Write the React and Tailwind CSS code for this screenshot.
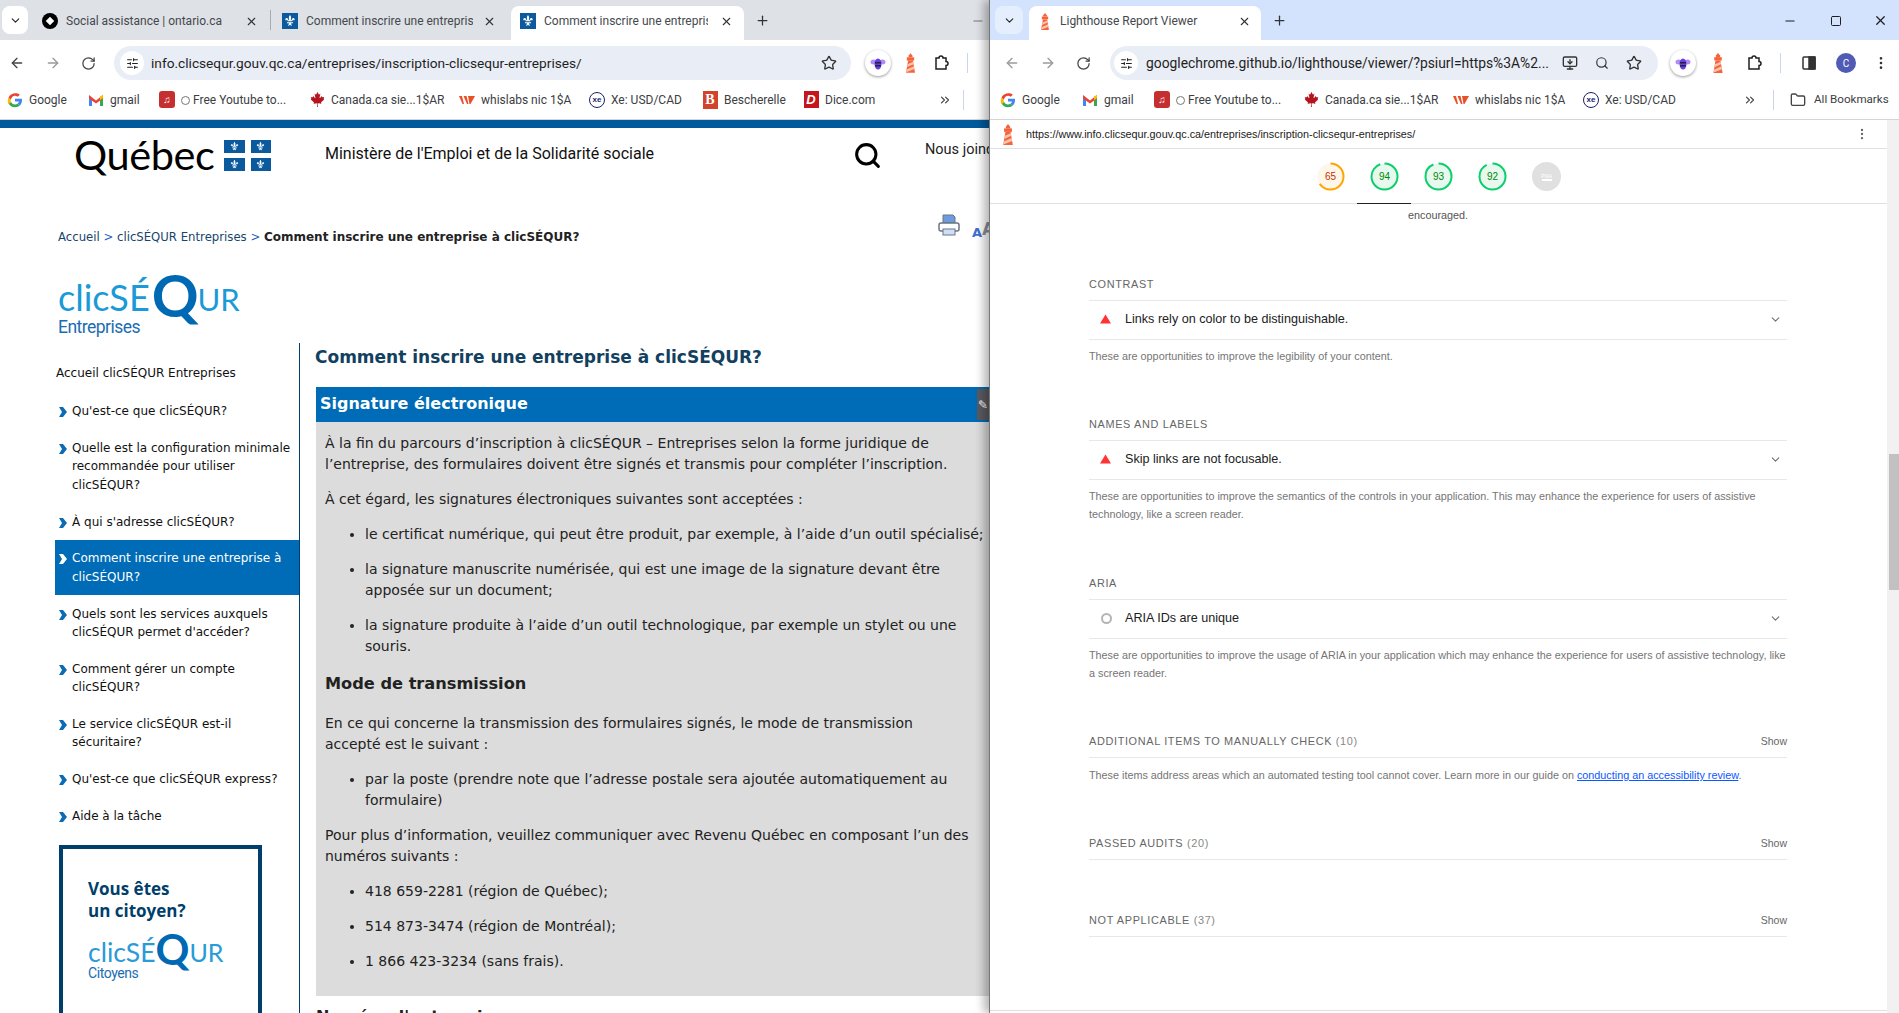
import { ArrowLeft, ArrowRight, RotateCw, Star, X, Plus, ChevronDown, Search, Minus, Square, SlidersHorizontal, EllipsisVertical, Folder, ChevronsRight, MonitorDown } from "lucide-react";
import { FaCanadianMapleLeaf } from "react-icons/fa";

const Fleur = ({ className }) => (
  <svg viewBox="0 0 16 16" className={className} fill="#fff">
    <path d="M8 1c1.600 1.800 1.600 3.600.8 6h1c.3-1.600 1.200-2.600 2.400-2.400 1.400.3 1.500 2.300.2 3-.1-.8-.6-1.100-1.200-.8-.5.3-.6.8-.6 1.400H5.400c0-.6-.1-1.100-.6-1.400-.6-.3-1.100 0-1.200.8-1.300-.7-1.200-2.700.2-3 1.200-.2 2.100.8 2.400 2.400h1C6.400 4.600 6.400 2.800 8 1z" />
    <path d="M4.500 9.500h7v1H9.200c0 1.200.5 2 1.300 2.700-.8.4-1.500.2-2.500-1-1 1.200-1.700 1.400-2.500 1 .8-.7 1.300-1.500 1.300-2.700H4.500z" />
  </svg>
);

const QcFavicon = () => (
  <span className="flex h-4 w-4 shrink-0 items-center justify-center bg-[#0b5a9e]">
    <Fleur className="h-3.5 w-3.5" />
  </span>
);

const Beacon = ({ className }) => (
  <svg viewBox="0 0 16 24" className={className}>
    <path d="M8 0l2.500 3v2h-5V3z" fill="#f4633a" />
    <rect x="3.500" y="5" width="9" height="4" fill="#f4633a" />
    <path d="M5 9h6l2.500 15h-11z" fill="#f4633a" />
    <path d="M4.300 13.500l7-3 .5 3-8 3.500zM3.200 20l9-4 .6 3.500-10 4z" fill="#fbc3ad" />
  </svg>
);

const Bee = () => (
  <span className="flex h-[26px] w-[26px] items-center justify-center rounded-full bg-white shadow-[0_1px_3px_rgba(0,0,0,0.4)]">
    <svg viewBox="0 0 16 16" className="h-4 w-4">
      <ellipse cx="3.500" cy="7" rx="3" ry="2.500" fill="#b18cf5" />
      <ellipse cx="12.500" cy="7" rx="3" ry="2.500" fill="#b18cf5" />
      <ellipse cx="8" cy="9" rx="3.500" ry="5.500" fill="#6d3ce0" />
      <rect x="5" y="7" width="6" height="1.500" fill="#1f2440" />
      <rect x="5" y="10" width="6" height="1.500" fill="#1f2440" />
    </svg>
  </span>
);

const PuzzleIcon = () => (
  <svg viewBox="0 0 16 16" className="h-4 w-4" fill="none" stroke="#1f1f1f" strokeWidth="1.500">
    <path d="M3 3h3a2 2 0 0 1 4 0h3v3.500a2 2 0 0 1 0 4V14H3z" />
  </svg>
);

const PrintIcon = () => (
  <svg viewBox="0 0 22 22" className="h-[22px] w-[22px] shrink-0">
    <path d="M5 1h10l2 2v6H5z" fill="#6d9be0" stroke="#6a7683" />
    <rect x="1" y="9" width="20" height="8" rx="2" fill="#fff" stroke="#6a7683" strokeWidth="1.500" />
    <rect x="5" y="15" width="12" height="6" fill="#cfe0f6" stroke="#6a7683" />
  </svg>
);

const Tune = () => (
  <span className="flex h-6 w-6 shrink-0 items-center justify-center rounded-full bg-white">
    <SlidersHorizontal size={13} color="#222" />
  </span>
);

const GIcon = () => (
  <svg viewBox="0 0 16 16" className="h-4 w-4">
    <path d="M15 8.200c0-.6 0-1-.1-1.500H8v2.800h4a3.400 3.400 0 0 1-1.500 2.200l2.300 1.800c1.400-1.300 2.200-3.200 2.200-5.300z" fill="#4285f4" />
    <path d="M8 15.200c2 0 3.600-.7 4.800-1.700l-2.300-1.800c-.6.400-1.500.7-2.500.7-1.900 0-3.500-1.300-4.100-3l-2.400 1.800A7.200 7.200 0 0 0 8 15.200z" fill="#34a853" />
    <path d="M3.900 10.400a4.300 4.300 0 0 1 0-2.800L1.500 5.800a7.200 7.200 0 0 0 0 6.400z" fill="#fbbc05" />
    <path d="M8 3.700c1.100 0 2 .4 2.800 1.100l2-2A7.200 7.200 0 0 0 1.500 5.800l2.400 1.800C4.500 5 6.100 3.700 8 3.700z" fill="#ea4335" />
  </svg>
);

const MIcon = () => (
  <svg viewBox="0 0 16 16" className="h-4 w-4">
    <path d="M1 3.500V14h3V7z" fill="#4285f4" />
    <path d="M15 3.500V14h-3V7z" fill="#34a853" />
    <path d="M1 3l7 5.500L15 3v3.500l-7 5-7-5z" fill="#ea4335" />
    <path d="M12 4.500L15 3v3l-3 2.200z" fill="#fbbc05" />
  </svg>
);

const MusicIcon = () => (
  <span className="flex h-[17px] w-4 items-center justify-center rounded-[3px] bg-[#c62f2f] text-[10px] leading-none text-white">♫</span>
);

const Maple = () => <FaCanadianMapleLeaf size={15} color="#b3141d" />;

const WIcon = () => (
  <svg viewBox="0 0 16 16" className="h-4 w-4">
    <path d="M0 4h3l2 8H3.500zM4.500 4h3l2 8H8zM9 4h7l-4.500 8H10.500z" fill="#e8502a" />
  </svg>
);

const XeIcon = () => (
  <span className="flex h-4 w-4 items-center justify-center rounded-full border border-[#1b1f6b] text-[8px] font-bold leading-none text-[#1b1f6b]" style={{ fontFamily: "Liberation Sans" }}>xe</span>
);

const BIcon = () => (
  <span className="flex h-[18px] w-[15px] items-center justify-center bg-[#d1432b] text-[14px] font-bold leading-none text-white" style={{ fontFamily: "Liberation Serif" }}>B</span>
);

const DIcon = () => (
  <span className="flex h-[17px] w-[15px] items-center justify-center bg-[#c4161c] text-[13px] font-bold italic leading-none text-white" style={{ fontFamily: "Liberation Sans" }}>D</span>
);

const Bookmark = ({ className, icon, children }) => (
  <div className={`flex shrink-0 items-center gap-[6px] whitespace-nowrap text-[12px] text-[#3c4043] ${className}`}>
    <span className="flex w-4 shrink-0 justify-center">{icon}</span>
    {children}
  </div>
);

const ClockMark = () => <span className="mr-[3px] inline-block h-[9px] w-[9px] rounded-full border border-[#777] align-[-1px]" />;

const Tab = ({ icon, children, className, closeClass }) => (
  <div className={`flex shrink-0 items-center overflow-hidden whitespace-nowrap pb-1 text-[12px] text-[#45484d] ${className}`}>
    {icon}
    <span className="ml-[8px] w-0 flex-1 overflow-hidden">{children}</span>
    <X size={13} color="#333" className={closeClass} />
  </div>
);

const SECTION_MENU = [
  ["Qu'est-ce que clicSÉQUR?"],
  ["Quelle est la configuration minimale", "recommandée pour utiliser", "clicSÉQUR?"],
  ["À qui s'adresse clicSÉQUR?"],
  ["Comment inscrire une entreprise à", "clicSÉQUR?"],
  ["Quels sont les services auxquels", "clicSÉQUR permet d'accéder?"],
  ["Comment gérer un compte", "clicSÉQUR?"],
  ["Le service clicSÉQUR est-il", "sécuritaire?"],
  ["Qu'est-ce que clicSÉQUR express?"],
  ["Aide à la tâche"],
];

const MenuItem = ({ lines, active }) => (
  <div className={`flex py-[9.200px] pl-[4px] text-[12px] leading-[18.400px] ${active ? "bg-[#006bb6] text-white" : "text-[#111]"}`}>
    <svg viewBox="0 0 8 10" className="mr-[5px] mt-[5px] h-[10px] w-[8px] shrink-0">
      <path d="M0 0h4l4 5-4 5H0l3-5z" fill={active ? "#fff" : "#0b6bb5"} />
    </svg>
    <div className="whitespace-nowrap">
      {lines.map((l) => <div key={l}>{l}</div>)}
    </div>
  </div>
);

const Gauge = ({ value, color, track, text, pct }) => {
  const c = 2 * Math.PI * 13;
  return (
    <div className="relative h-[29px] w-[29px]">
      <svg viewBox="0 0 29 29" className="h-[29px] w-[29px]">
        <circle cx="14.500" cy="14.500" r="13" fill={track} stroke="none" />
        <circle cx="14.500" cy="14.500" r="13" fill="none" stroke={color} strokeWidth="2" strokeDasharray={`${(c * pct) / 100} ${c}`} transform="rotate(-90 14.500 14.500)" />
      </svg>
      <span className="absolute inset-0 flex items-center justify-center text-[10px]" style={{ color: text }}>{value}</span>
    </div>
  );
};

const Triangle = () => (
  <svg viewBox="0 0 12 10" className="h-[10px] w-[11px]"><path d="M6 0l6 10H0z" fill="#ff3333" /></svg>
);

const Ring = () => <span className="ml-px h-[11px] w-[11px] rounded-full border-2 border-[#b5b5b5]" />;

const Group = ({ className, title, count, show, icon, row, desc }) => (
  <div className={className}>
    <div className="flex h-[25px] items-start justify-between border-b border-[#e8e8e8] pb-2 text-[10.900px] leading-4 tracking-[0.06em] text-[#666]">
      <span>{title}{count && <span className="text-[#888]"> {count}</span>}</span>
      {show && <span className="text-[10.500px] tracking-normal">Show</span>}
    </div>
    {row && (
      <div className="flex h-[39px] items-center border-b border-[#e8e8e8] pb-[2px] pl-[11px] pr-[5px] text-[12.600px] text-[#212121]">
        <span className="flex w-[25px] items-center">{icon}</span>
        <span className="flex-1">{row}</span>
        <ChevronDown size={13} color="#707070" />
      </div>
    )}
    {desc && <div className={`whitespace-nowrap text-[10.800px] leading-[18px] text-[#757575] ${row ? "mt-[7px]" : "mt-2"}`}>{desc}</div>}
  </div>
);

export default function App() {
  return (
    <div className="flex h-[1013px] w-[1899px] overflow-hidden bg-white" style={{ fontFamily: "Roboto, sans-serif" }}>
      {/* left window */}
      <div className="flex w-[989px] shrink-0 flex-col overflow-hidden">
        <div className="flex h-10 shrink-0 items-end bg-[#dee1e6] pl-[2px]">
          <div className="mb-[6px] flex h-[28px] w-[26px] shrink-0 items-center justify-center rounded-lg bg-white">
            <ChevronDown size={13} color="#222" />
          </div>
          <Tab className="h-[34px] w-[242px] pl-[14px] pr-[12px]" closeClass="ml-[18px]" icon={
            <span className="flex h-4 w-4 shrink-0 items-center justify-center rounded-full bg-black"><span className="h-[6px] w-[6px] rotate-45 bg-white" /></span>
          }>Social assistance | ontario.ca</Tab>
          <div className="mb-[10px] h-[20px] w-px shrink-0 bg-[#a8abb0]" />
          <Tab className="h-[34px] w-[240px] pl-[11px] pr-[15px]" closeClass="ml-[10px]" icon={<QcFavicon />}>Comment inscrire une entreprise à clicSÉQUR?</Tab>
          <Tab className="h-[34px] w-[233px] rounded-t-lg bg-white pl-[9px] pr-[11px]" closeClass="ml-[12px]" icon={<QcFavicon />}>Comment inscrire une entreprise à clicSÉQUR?</Tab>
          <Plus size={15} color="#333" className="mb-[12px] ml-[11px] shrink-0" />
          <Minus size={14} color="#777" className="mb-[12px] ml-[201px] shrink-0" />
        </div>

        <div className="flex h-10 shrink-0 items-center bg-white pl-[9px] pt-[6px]">
          <ArrowLeft size={16} color="#444" />
          <ArrowRight size={16} color="#9a9a9a" className="ml-[20px]" />
          <RotateCw size={15} color="#444" className="ml-[20px]" />
          <div className="ml-[18px] flex h-[34px] w-[737px] items-center rounded-full bg-[#e9edf6] pl-[6px] pr-[14px]">
            <Tune />
            <span className="ml-[7px] flex-1 text-[13.700px] text-[#1f1f1f]">info.clicsequr.gouv.qc.ca/entreprises/inscription-clicsequr-entreprises/</span>
            <Star size={16} color="#333" />
          </div>
          <span className="ml-[14px]"><Bee /></span>
          <Beacon className="ml-[13px] h-[20px] w-[13px]" />
          <span className="ml-[16px]"><PuzzleIcon /></span>
          <div className="ml-[18px] h-[20px] w-px bg-[#c9d7ee]" />
        </div>

        <div className="flex h-10 shrink-0 items-center border-b border-[#d5d5d5] bg-white pl-[7px]">
          <Bookmark className="w-[81px]" icon={<GIcon />}>Google</Bookmark>
          <Bookmark className="w-[71px]" icon={<MIcon />}>gmail</Bookmark>
          <Bookmark className="w-[150px]" icon={<MusicIcon />}><span><ClockMark />Free Youtube to...</span></Bookmark>
          <Bookmark className="w-[150px]" icon={<Maple />}>Canada.ca sie...1$AR</Bookmark>
          <Bookmark className="w-[130px]" icon={<WIcon />}>whislabs nic 1$A</Bookmark>
          <Bookmark className="w-[113px]" icon={<XeIcon />}>Xe: USD/CAD</Bookmark>
          <Bookmark className="w-[101px]" icon={<BIcon />}>Bescherelle</Bookmark>
          <Bookmark className="w-[108px]" icon={<DIcon />}>Dice.com</Bookmark>
          <ChevronsRight size={14} color="#444" className="ml-[27px]" />
          <div className="ml-[11px] h-[20px] w-px bg-[#c9d7ee]" />
        </div>

        {/* clicSEQUR page */}
        <div className="flex-1 overflow-hidden bg-white" style={{ fontFamily: '"DejaVu Sans", sans-serif' }}>
          <div className="h-2 bg-[#005a9c]" />
          <div className="flex h-[85px] items-start whitespace-nowrap">
            <span className="ml-[74px] mt-[1px] w-[150px] shrink-0 text-[41.500px] leading-[50px] tracking-[-0.01em] text-black" style={{ fontFamily: "Lato, sans-serif" }}>Québec</span>
            <div className="mt-[12px] grid w-[47px] shrink-0 grid-cols-2 gap-x-[6px] gap-y-[5px]">
              {[0, 1, 2, 3].map((i) => (
                <div key={i} className="flex h-[13px] items-center justify-center bg-[#0b5a9e]"><Fleur className="h-[11px] w-[11px]" /></div>
              ))}
            </div>
            <span className="ml-[54px] mt-[15px] w-[329px] shrink-0 text-[16px] leading-[22px] text-[#111]" style={{ fontFamily: "Roboto, sans-serif" }}>Ministère de l'Emploi et de la Solidarité sociale</span>
            <Search size={29} strokeWidth={2.500} color="#000" className="ml-[199px] mt-[13px] shrink-0" />
            <span className="ml-[43px] mt-[12px] shrink-0 text-[14.500px] leading-5 text-[#222]" style={{ fontFamily: "Roboto, sans-serif" }}>Nous joindre</span>
          </div>
          <div className="flex h-[63px] items-start whitespace-nowrap">
            <div className="ml-[58px] mt-[14px] w-[880px] shrink-0 text-[11.700px] leading-5 text-[#17456b]">
              Accueil <span className="text-[#2a5fc0]">&gt;</span> clicSÉQUR Entreprises <span className="text-[#2a5fc0]">&gt;</span>{" "}
              <strong className="text-[12px] font-bold text-[#222]">Comment inscrire une entreprise à clicSÉQUR?</strong>
            </div>
            <span className="mt-[1px] shrink-0"><PrintIcon /></span>
            <span className="ml-[12px] mt-[10px] shrink-0 text-[13px] font-bold leading-5 text-[#3f6fd0]">A</span>
            <span className="mt-[6px] shrink-0 text-[17px] font-bold leading-5 text-[#8a8f98]">A</span>
          </div>

          <div className="-mt-[12px] h-[79px] pl-[58px]">
            <div className="flex items-baseline whitespace-nowrap leading-none" style={{ fontFamily: "Lato, sans-serif" }}>
              <span className="text-[36px] text-[#1a9ad6]">clicSÉ</span>
              <span className="ml-[2px] translate-y-[6px] text-[58px] font-bold leading-[50px] text-[#0069b4]">Q</span>
              <span className="-ml-[1px] text-[31px] text-[#1a9ad6]">UR</span>
            </div>
            <div className="mt-[2px] text-[17.500px] leading-5 tracking-[-0.03em] text-[#1a6cb3]" style={{ fontFamily: "Roboto, sans-serif" }}>Entreprises</div>
          </div>

          <div className="flex">
            <aside className="w-[300px] shrink-0 border-r border-[#003e6e] pl-[55px] pt-[21px]">
              <div className="mb-[11px] ml-px whitespace-nowrap text-[12px] leading-[18px] text-[#111]">Accueil clicSÉQUR Entreprises</div>
              {SECTION_MENU.map((lines, i) => <MenuItem key={lines[0]} lines={lines} active={i === 3} />)}
              <div className="ml-[4px] mt-[11px] h-[300px] w-[203px] border-4 border-[#003f6b] pl-[25px] pt-[29px]">
                <div className="text-[17px] font-bold leading-[22px] text-[#003f6b]" style={{ fontFamily: '"Open Sans", sans-serif' }}>Vous êtes<br />un citoyen?</div>
                <div className="mt-[5px] flex items-baseline whitespace-nowrap leading-none" style={{ fontFamily: "Lato, sans-serif" }}>
                  <span className="text-[26.500px] text-[#2a9ad8]">clicSÉ</span>
                  <span className="translate-y-[3px] text-[42px] font-bold leading-[38px] text-[#0069b4]">Q</span>
                  <span className="text-[25px] text-[#2a9ad8]">UR</span>
                </div>
                <div className="-mt-[1px] text-[14px] leading-[16px] tracking-[-0.03em] text-[#1a6cb3]" style={{ fontFamily: "Roboto, sans-serif" }}>Citoyens</div>
              </div>
            </aside>
            <main className="ml-[15px] w-[674px] shrink-0 pl-px">
              <h2 className="-ml-px mt-px whitespace-nowrap text-[17px] font-bold leading-[26px] text-[#12405f]">Comment inscrire une entreprise à clicSÉQUR?</h2>
              <div className="mt-[17px] flex h-[35px] items-center justify-between bg-[#006bb6] pl-[4px] text-[16px] font-bold text-white">
                <span className="pb-[2px]">Signature électronique</span>
                <span className="flex h-[31px] w-3 items-center justify-center overflow-hidden bg-[#5a5a60] text-[12px] text-white">✎</span>
              </div>
              <div className="whitespace-nowrap bg-[#dcdcdc] pb-[10px] pl-[9px] pt-[11px] text-[14px] leading-[21px] text-[#222]">
                <p className="mb-[14px]">À la fin du parcours d’inscription à clicSÉQUR – Entreprises selon la forme juridique de<br />l’entreprise, des formulaires doivent être signés et transmis pour compléter l’inscription.</p>
                <p className="mb-[14px]">À cet égard, les signatures électroniques suivantes sont acceptées :</p>
                <ul className="list-disc pl-[40px]">
                  <li className="mb-[14px]">le certificat numérique, qui peut être produit, par exemple, à l’aide d’un outil spécialisé;</li>
                  <li className="mb-[14px]">la signature manuscrite numérisée, qui est une image de la signature devant être<br />apposée sur un document;</li>
                  <li className="mb-[14px]">la signature produite à l’aide d’un outil technologique, par exemple un stylet ou une<br />souris.</li>
                </ul>
                <h3 className="mb-[17px] text-[16.200px] font-bold leading-[25px] text-[#222]">Mode de transmission</h3>
                <p className="mb-[14px]">En ce qui concerne la transmission des formulaires signés, le mode de transmission<br />accepté est le suivant :</p>
                <ul className="list-disc pl-[40px]">
                  <li className="mb-[14px]">par la poste (prendre note que l’adresse postale sera ajoutée automatiquement au<br />formulaire)</li>
                </ul>
                <p className="mb-[14px]">Pour plus d’information, veuillez communiquer avec Revenu Québec en composant l’un des<br />numéros suivants :</p>
                <ul className="list-disc pl-[40px]">
                  <li className="mb-[14px]">418 659-2281 (région de Québec);</li>
                  <li className="mb-[14px]">514 873-3474 (région de Montréal);</li>
                  <li className="mb-[14px]">1 866 423-3234 (sans frais).</li>
                </ul>
              </div>
              <div className="mt-[11px] text-[16px] font-bold leading-5 text-[#222]">Numéro d'entreprise</div>
            </main>
          </div>
        </div>
      </div>

      {/* right window */}
      <div className="relative z-10 flex flex-1 flex-col overflow-hidden border-l border-[#777] bg-white shadow-[-5px_0_9px_rgba(0,0,0,0.3)]">
        <div className="flex h-10 shrink-0 items-end bg-[#d3e3fd] pl-[5px]">
          <div className="mb-[6px] flex h-[28px] w-[28px] shrink-0 items-center justify-center rounded-lg bg-[#e4eefd]">
            <ChevronDown size={13} color="#222" />
          </div>
          <Tab className="ml-[6px] h-[34px] w-[232px] rounded-t-lg bg-white pl-[9px] pr-[10px] text-[#3c4043]" closeClass="ml-[2px]" icon={<Beacon className="h-[17px] w-[14px] shrink-0" />}>Lighthouse Report Viewer</Tab>
          <Plus size={15} color="#333" className="mb-[12px] ml-[11px] shrink-0" />
          <Minus size={14} color="#1f1f1f" className="mb-[12px] ml-[496px] shrink-0" />
          <Square size={12} color="#1f1f1f" className="mb-[13px] ml-[33px] shrink-0" />
          <X size={15} color="#1f1f1f" className="mb-[12px] ml-[31px] shrink-0" />
        </div>

        <div className="flex h-10 shrink-0 items-center bg-white pl-[14px] pt-[6px]">
          <ArrowLeft size={16} color="#9a9a9a" />
          <ArrowRight size={16} color="#9a9a9a" className="ml-[20px]" />
          <RotateCw size={15} color="#444" className="ml-[20px]" />
          <div className="ml-[19px] flex h-[34px] w-[548px] items-center rounded-full bg-[#e9edf6] pl-[4px] pr-[16px]">
            <Tune />
            <span className="ml-[8px] flex-1 whitespace-nowrap text-[13.850px] text-[#1f1f1f]">googlechrome.github.io/lighthouse/viewer/?psiurl=https%3A%2...</span>
            <MonitorDown size={16} color="#333" />
            <Search size={14} color="#333" className="ml-[17px]" />
            <Star size={16} color="#333" className="ml-[17px]" />
          </div>
          <span className="ml-[12px]"><Bee /></span>
          <Beacon className="ml-[15px] h-[20px] w-[14px]" />
          <span className="ml-[21px]"><PuzzleIcon /></span>
          <div className="ml-[18px] h-[20px] w-px bg-[#c9d7ee]" />
          <svg viewBox="0 0 16 16" className="ml-[20px] h-4 w-4" fill="none" stroke="#333" strokeWidth="1.500"><rect x="2" y="2" width="12" height="12" rx="1" /><rect x="8" y="2" width="6" height="12" fill="#333" /></svg>
          <span className="ml-[19px] flex h-5 w-5 items-center justify-center rounded-full bg-[#4f5bb5] text-[10px] text-white">C</span>
          <EllipsisVertical size={16} color="#333" className="ml-[17px]" />
        </div>

        <div className="flex h-10 shrink-0 items-center border-b border-[#d5d5d5] bg-white pl-[10px]">
          <Bookmark className="w-[82px]" icon={<GIcon />}>Google</Bookmark>
          <Bookmark className="w-[72px]" icon={<MIcon />}>gmail</Bookmark>
          <Bookmark className="w-[149px]" icon={<MusicIcon />}><span><ClockMark />Free Youtube to...</span></Bookmark>
          <Bookmark className="w-[150px]" icon={<Maple />}>Canada.ca sie...1$AR</Bookmark>
          <Bookmark className="w-[130px]" icon={<WIcon />}>whislabs nic 1$A</Bookmark>
          <Bookmark className="w-[160px]" icon={<XeIcon />}>Xe: USD/CAD</Bookmark>
          <ChevronsRight size={14} color="#444" />
          <div className="ml-[16px] h-[20px] w-px bg-[#c9d7ee]" />
          <Folder size={16} color="#444" className="ml-[16px]" />
          <span className="ml-[8px] whitespace-nowrap text-[11.600px] text-[#3c4043]">All Bookmarks</span>
        </div>

        {/* lighthouse report */}
        <div className="flex flex-1 overflow-hidden" style={{ fontFamily: '"Liberation Sans", sans-serif' }}>
          <div className="flex w-[897px] shrink-0 flex-col">
            <div className="flex h-[29px] shrink-0 items-center border-b border-[#e0e0e0] pl-[11px] pr-[18px] text-[10.800px] text-[#212121]">
              <Beacon className="h-[21px] w-[14px] shrink-0" />
              <span className="ml-[11px] flex-1">https://www.info.clicsequr.gouv.qc.ca/entreprises/inscription-clicsequr-entreprises/</span>
              <EllipsisVertical size={14} color="#666" />
            </div>
            <div className="relative flex h-[55px] shrink-0 items-center justify-center gap-[25px] border-b border-[#e0e0e0] pt-px">
              <Gauge value="65" color="#ffa400" track="#fff6ea" text="#c33300" pct={65} />
              <Gauge value="94" color="#0cce6b" track="#e7f9ef" text="#008800" pct={94} />
              <Gauge value="93" color="#0cce6b" track="#e7f9ef" text="#008800" pct={93} />
              <Gauge value="92" color="#0cce6b" track="#e7f9ef" text="#008800" pct={92} />
              <div className="flex h-[29px] w-[29px] flex-col items-center justify-center rounded-full bg-[#e0e0e0] text-white">
                <span className="text-[5px] leading-[6px]">PWA</span>
                <span className="h-[2px] w-[10px] bg-white" />
              </div>
              <span className="absolute bottom-[-1px] left-[367px] h-px w-[54px] bg-[#212121]" />
            </div>
            <div className="flex-1 overflow-hidden">
              <div className="mt-[3px] pr-px text-center text-[10.800px] leading-4 text-[#555]">encouraged.</div>
              <div className="ml-[99px] w-[698px]">
                <Group className="mt-[53px]" title="CONTRAST" icon={<Triangle />} row="Links rely on color to be distinguishable." desc="These are opportunities to improve the legibility of your content." />
                <Group className="mt-[51px]" title="NAMES AND LABELS" icon={<Triangle />} row="Skip links are not focusable." desc={<>These are opportunities to improve the semantics of the controls in your application. This may enhance the experience for users of assistive<br />technology, like a screen reader.</>} />
                <Group className="mt-[52px]" title="ARIA" icon={<Ring />} row="ARIA IDs are unique" desc={<>These are opportunities to improve the usage of ARIA in your application which may enhance the experience for users of assistive technology, like<br />a screen reader.</>} />
                <Group className="mt-[51px]" title="ADDITIONAL ITEMS TO MANUALLY CHECK" count="(10)" show desc={<>These items address areas which an automated testing tool cannot cover. Learn more in our guide on <span className="text-[#0b57ff] underline">conducting an accessibility review</span>.</>} />
                <Group className="mt-[51px]" title="PASSED AUDITS" count="(20)" show />
                <Group className="mt-[52px]" title="NOT APPLICABLE" count="(37)" show />
              </div>
              <div className="mt-[73px] border-t border-[#e0e0e0]" />
            </div>
          </div>
          <div className="flex w-3 shrink-0 flex-col bg-[#f1f1f1] pl-[2px]">
            <div className="mt-[334px] h-[136px] bg-[#c1c1c1]" />
          </div>
        </div>
      </div>
    </div>
  );
}
